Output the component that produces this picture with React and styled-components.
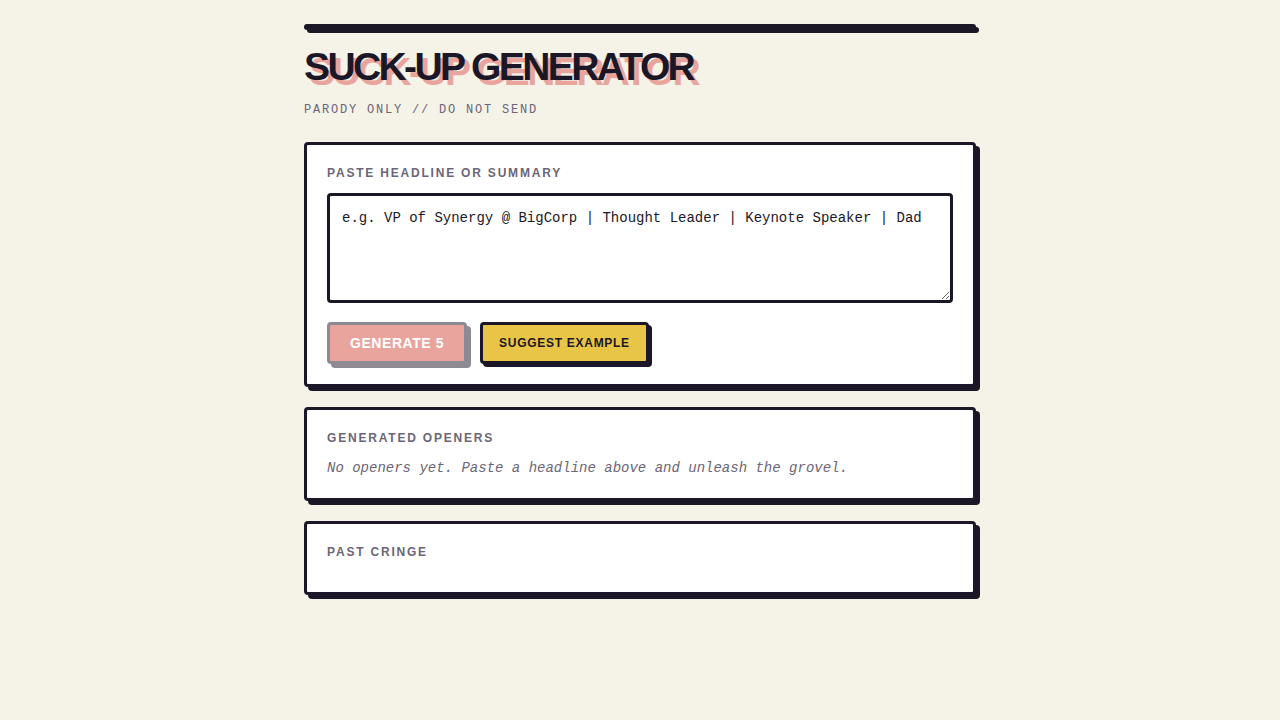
import React from "react";
import styled, { createGlobalStyle } from "styled-components";

const INK = "#1b1726";
const PINK = "#e9a59d";
const MUTED = "#6b6577";

const Global = createGlobalStyle`
  * { box-sizing: border-box; }
  html, body { margin: 0; padding: 0; }
  body {
    background: #f5f2e8;
    font-family: "Liberation Sans", Arial, sans-serif;
    color: ${INK};
  }
`;

const Page = styled.main`
  max-width: 672px;
  margin: 0 auto;
  padding: 24px 0 40px;
`;

const Header = styled.header`
  margin-bottom: 24px;
`;

const TopBar = styled.div`
  height: 6px;
  background: ${INK};
  border-radius: 3px;
  box-shadow: 3px 3px 0 ${INK};
`;

const Title = styled.h1`
  margin: 17px 0 0;
  font-family: "Liberation Sans", Arial, sans-serif;
  font-weight: 700;
  font-size: 39px;
  line-height: 1;
  letter-spacing: -2.6px;
  color: ${INK};
  text-shadow: 5px 5px 0 ${PINK};
`;

const Subtitle = styled.p`
  margin: 16px 0 0;
  font-family: "Liberation Mono", "Courier New", monospace;
  font-size: 12px;
  line-height: 16px;
  letter-spacing: 0.15em;
  color: ${MUTED};
`;

const Stack = styled.div`
  display: flex;
  flex-direction: column;
  gap: 20px;
`;

const Card = styled.section`
  background: #fff;
  border: 3px solid ${INK};
  border-radius: 4px;
  box-shadow: 4px 4px 0 ${INK};
  padding: 20px;
`;

const Label = styled.h2`
  margin: 0 0 12px;
  font-size: 12px;
  line-height: 16px;
  font-weight: 700;
  letter-spacing: 0.15em;
  text-transform: uppercase;
  color: ${MUTED};
`;

const Input = styled.textarea`
  display: block;
  width: 100%;
  height: 110px;
  padding: 12px;
  border: 3px solid ${INK};
  border-radius: 4px;
  background: #fff;
  font-family: "Liberation Mono", "Courier New", monospace;
  font-size: 14px;
  line-height: 20px;
  color: ${INK};
  resize: vertical;
  outline: none;
  &::placeholder {
    color: ${INK};
    opacity: 1;
  }
`;

const Actions = styled.div`
  display: flex;
  gap: 13px;
  margin-top: 19px;
`;

const Button = styled.button`
  height: 42px;
  padding: 0 ${(p) => (p.$primary ? "20px" : "16px")};
  border-radius: 4px;
  border: 3px solid ${(p) => (p.$primary ? "#8e8a94" : INK)};
  background: ${(p) => (p.$primary ? PINK : "#e8c547")};
  color: ${(p) => (p.$primary ? "#fff" : INK)};
  box-shadow: ${(p) => (p.$primary ? "4px 4px 0 #8e8a94" : `3px 3px 0 ${INK}`)};
  font-family: "Liberation Sans", Arial, sans-serif;
  font-weight: 700;
  font-size: ${(p) => (p.$primary ? "14px" : "12px")};
  letter-spacing: ${(p) => (p.$primary ? "0.04em" : "0.06em")};
  text-transform: uppercase;
  cursor: ${(p) => (p.disabled ? "not-allowed" : "pointer")};
`;

const Empty = styled.p`
  margin: 0;
  padding-top: 1px;
  font-family: "Liberation Mono", "Courier New", monospace;
  font-style: italic;
  font-size: 14px;
  line-height: 19px;
  color: ${MUTED};
`;

const History = styled.ul`
  margin: 0;
  padding: 0;
  list-style: none;
`;

export default function App() {
  return (
    <>
      <Global />
      <Page>
        <Header>
          <TopBar />
          <Title>SUCK-UP GENERATOR</Title>
          <Subtitle>PARODY ONLY // DO NOT SEND</Subtitle>
        </Header>
        <Stack>
          <Card>
            <Label>Paste headline or summary</Label>
            <Input placeholder="e.g. VP of Synergy @ BigCorp | Thought Leader | Keynote Speaker | Dad" />
            <Actions>
              <Button $primary disabled>Generate 5</Button>
              <Button>Suggest example</Button>
            </Actions>
          </Card>
          <Card>
            <Label>Generated openers</Label>
            <Empty>No openers yet. Paste a headline above and unleash the grovel.</Empty>
          </Card>
          <Card>
            <Label>Past cringe</Label>
            <History />
          </Card>
        </Stack>
      </Page>
    </>
  );
}
